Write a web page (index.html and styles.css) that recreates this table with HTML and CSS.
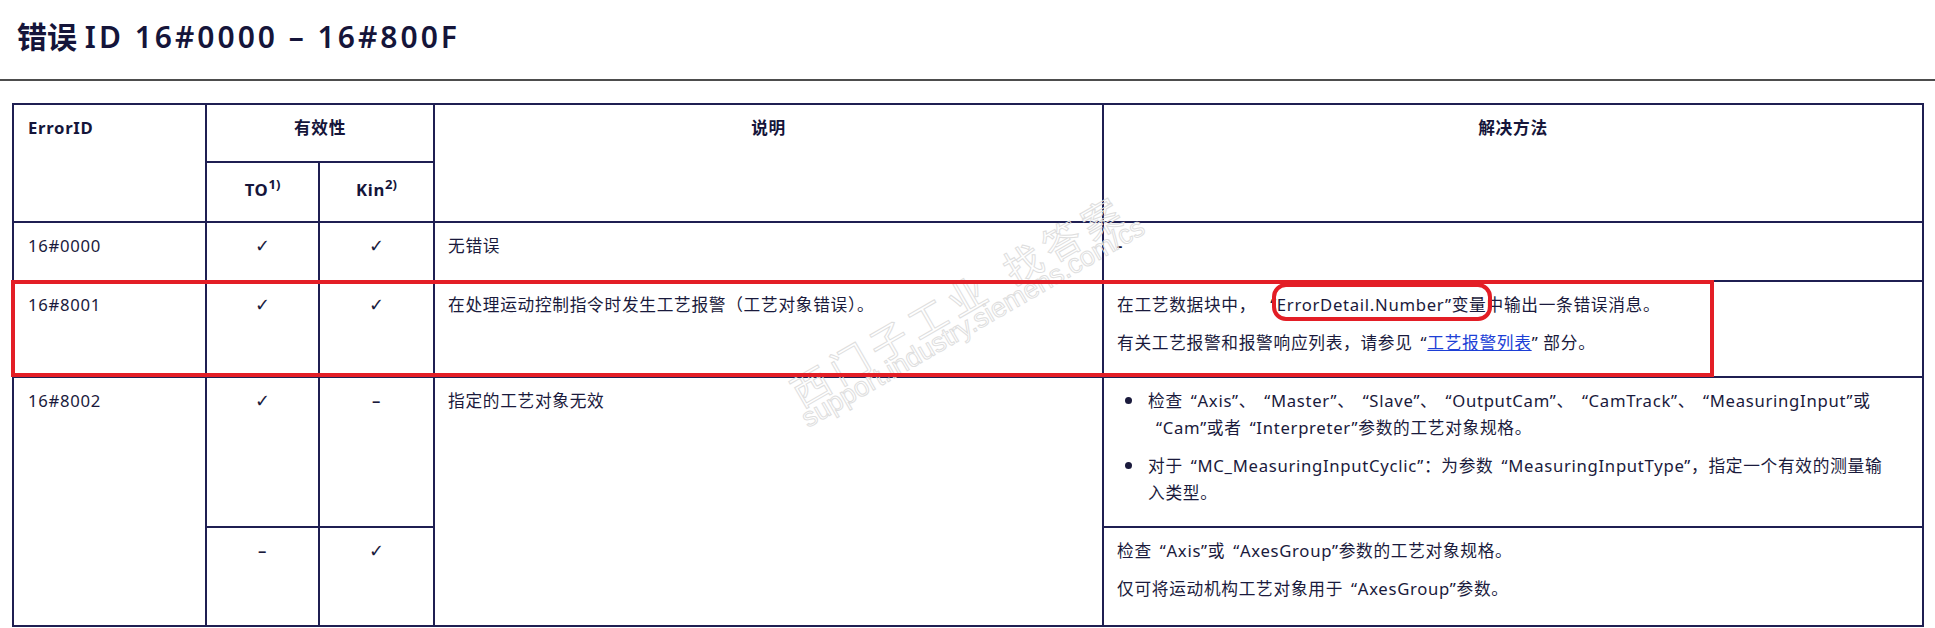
FILE: index.html
```html
<!DOCTYPE html>
<html lang="zh-CN">
<head>
<meta charset="utf-8">
<title>错误 ID 16#0000 – 16#800F</title>
<link rel="stylesheet" href="styles.css">
</head>
<body>
<header class="title-bar">
  <h1>错误 <span class="lat">ID 16#0000 – 16#800F</span></h1>
</header>
<main class="content">
  <table class="err">
    <colgroup>
      <col class="c-id"><col class="c-to"><col class="c-kin"><col class="c-desc"><col class="c-sol">
    </colgroup>
    <thead>
      <tr>
        <th rowspan="2" class="left">ErrorID</th>
        <th colspan="2">有效性</th>
        <th rowspan="2">说明</th>
        <th rowspan="2">解决方法</th>
      </tr>
      <tr class="sub">
        <th>TO<sup>1)</sup></th>
        <th>Kin<sup>2)</sup></th>
      </tr>
    </thead>
    <tbody>
      <tr class="r0">
        <td class="num"><p>16#0000</p></td>
        <td class="c"><p class="chk">✓</p></td>
        <td class="c"><p class="chk">✓</p></td>
        <td><p>无错误</p></td>
        <td><p class="dash">-</p></td>
      </tr>
      <tr class="r1">
        <td class="num"><p>16#8001</p></td>
        <td class="c"><p class="chk">✓</p></td>
        <td class="c"><p class="chk">✓</p></td>
        <td><p>在处理运动控制指令时发生工艺报警（工艺对象错误）。</p></td>
        <td>
          <p>在工艺数据块中，<span class="qo qo-wide">“</span>ErrorDetail.Number”变量中输出一条错误消息。</p>
          <p>有关工艺报警和报警响应列表，请参见<span class="qo">“</span><a class="lnk" href="#">工艺报警列表</a>” 部分。</p>
        </td>
      </tr>
      <tr class="r2a">
        <td class="num" rowspan="2"><p>16#8002</p></td>
        <td class="c"><p class="chk">✓</p></td>
        <td class="c"><p class="dash">–</p></td>
        <td rowspan="2"><p>指定的工艺对象无效</p></td>
        <td>
          <ul class="bul">
            <li>检查<span class="qo">“</span>Axis”、<span class="qo">“</span>Master”、<span class="qo">“</span>Slave”、<span class="qo">“</span>OutputCam”、<span class="qo">“</span>CamTrack”、<span class="qo">“</span>MeasuringInput”或<br><span class="qo">“</span>Cam”或者<span class="qo">“</span>Interpreter”参数的工艺对象规格。</li>
            <li>对于<span class="qo">“</span>MC_MeasuringInputCyclic”：为参数<span class="qo">“</span>MeasuringInputType”，指定一个有效的测量输<br>入类型。</li>
          </ul>
        </td>
      </tr>
      <tr class="r2b">
        <td class="c"><p class="dash">–</p></td>
        <td class="c"><p class="chk">✓</p></td>
        <td>
          <p>检查<span class="qo">“</span>Axis”或<span class="qo">“</span>AxesGroup”参数的工艺对象规格。</p>
          <p>仅可将运动机构工艺对象用于<span class="qo">“</span>AxesGroup”参数。</p>
        </td>
      </tr>
    </tbody>
  </table>
</main>

<div class="wm wm-cn" aria-hidden="true">西门子工业<span class="wm-gap">找答案</span></div>
<div class="wm wm-url" aria-hidden="true">support.industry.siemens.com/cs</div>

<div class="mark-row" aria-hidden="true"></div>
<div class="mark-var" aria-hidden="true"></div>
</body>
</html>
```
FILE: styles.css
```css
html, body {
  margin: 0;
  padding: 0;
  background: #ffffff;
}

body {
  font-family: "Noto Sans", "Noto Sans CJK SC", sans-serif;
  font-size: 16.7px;
  letter-spacing: 0.7px;
  color: #1a1a3c;
  overflow: hidden;
}

.title-bar {
  padding: 17px 17px 22px;
  border-bottom: 2px solid #4d4d4d;
  letter-spacing: 0;
}

.title-bar h1 {
  margin: 0;
  font-size: 30px;
  line-height: 40px;
  font-weight: 600;
  color: #15153a;
}

.title-bar .lat {
  letter-spacing: 3px;
}

.content {
  padding: 22px 0 0 12px;
}

.err {
  border-collapse: collapse;
  table-layout: fixed;
  width: 1912px;
}

.c-id { width: 193px; }
.c-to { width: 113px; }
.c-kin { width: 115px; }
.c-desc { width: 669px; }
.c-sol { width: 820px; }

.err th,
.err td {
  border: 2px solid #1f1f52;
  vertical-align: top;
}

.err th {
  padding: 9px 13px 20px;
  line-height: 27px;
  font-weight: 700;
  text-align: center;
  color: #15153a;
}

.err th.left {
  text-align: left;
  padding-left: 14px;
}

.err tr.sub th {
  padding-top: 13px;
  padding-bottom: 18px;
}

.err sup {
  font-size: 13px;
  line-height: 0;
  letter-spacing: 0;
  vertical-align: 7px;
}

.err td {
  padding: 9px 13px 9px;
  text-align: left;
}

.err td.num {
  padding-left: 14px;
}

.err td.c {
  text-align: center;
}

.err tr.r0 td { padding-bottom: 10px; }
.err tr.r2b td { padding-bottom: 12px; }

.err p {
  margin: 0 0 11px;
  line-height: 27px;
}

.chk {
  font-family: "DejaVu Sans", sans-serif;
  font-size: 18px;
  letter-spacing: 0;
}

.dash {
  font-weight: 600;
}

.qo {
  padding-left: 8px;
}

.qo-wide {
  padding-left: 14px;
}

.lnk {
  color: #1d3fd6;
  text-decoration: underline;
}

.bul {
  list-style: none;
  margin: 0;
  padding: 0 0 0 31px;
}

.bul li {
  position: relative;
  line-height: 27px;
  margin: 0 0 11px;
  white-space: nowrap;
}

.bul li::before {
  content: "";
  position: absolute;
  left: -23px;
  top: 10px;
  width: 7px;
  height: 7px;
  border-radius: 50%;
  background: #1a1a3c;
}

/* watermark overlay */
.wm {
  position: absolute;
  transform-origin: 0 0;
  transform: rotate(-30deg);
  color: transparent;
  -webkit-text-stroke: 1px #dedede;
  white-space: nowrap;
  pointer-events: none;
  letter-spacing: 0;
}

.wm-cn {
  left: 784px;
  top: 378px;
  font-family: "Noto Sans CJK SC", sans-serif;
  font-size: 38px;
  line-height: 38px;
  letter-spacing: 7px;
}

.wm-gap {
  margin-left: 20px;
}

.wm-url {
  left: 797px;
  top: 409px;
  font-family: "Liberation Sans", Arial, sans-serif;
  font-size: 27px;
  line-height: 27px;
}

/* red annotation marks */
.mark-row {
  position: absolute;
  left: 11px;
  top: 280px;
  width: 1703px;
  height: 97px;
  border: 4px solid #e31e26;
  box-sizing: border-box;
}

.mark-var {
  position: absolute;
  left: 1272px;
  top: 283px;
  width: 220px;
  height: 38px;
  border: 4px solid #e31e26;
  border-radius: 14px;
  box-sizing: border-box;
}
```
